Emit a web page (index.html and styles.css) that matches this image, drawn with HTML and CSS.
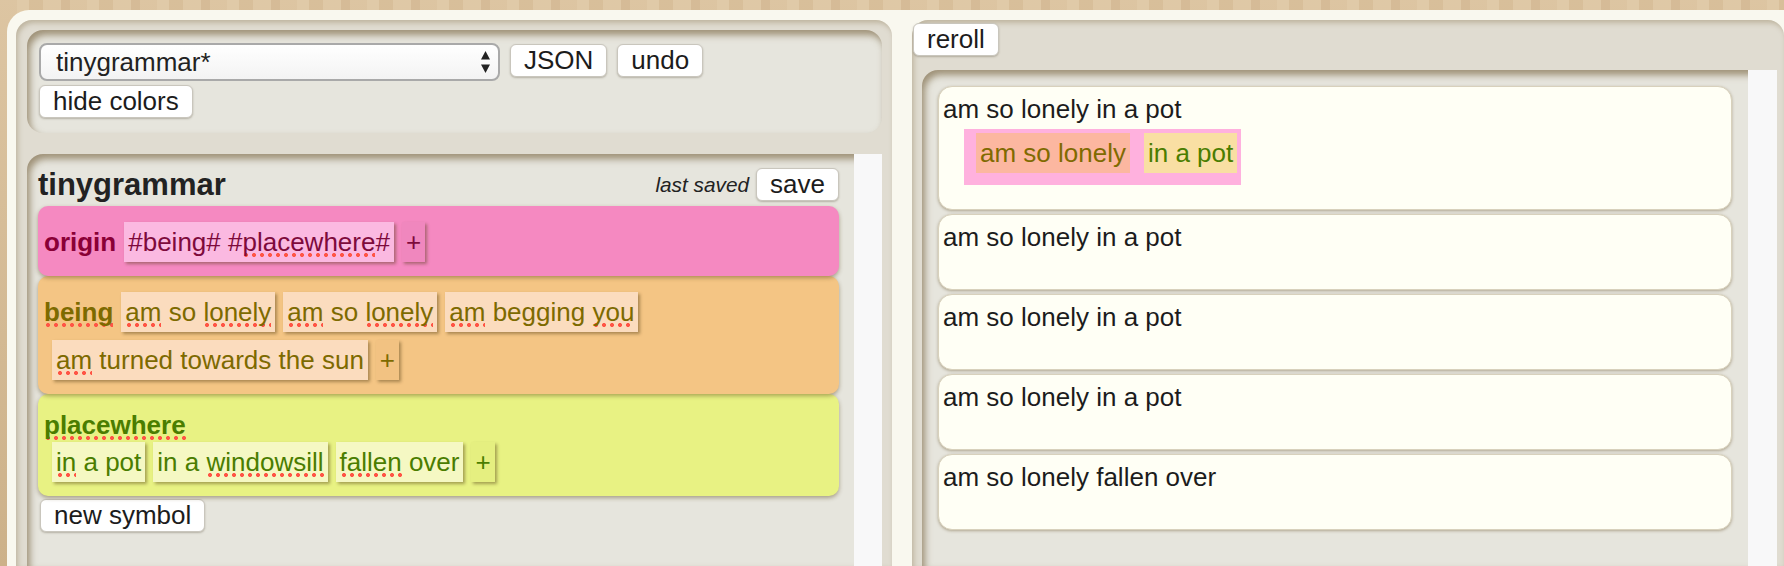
FILE: index.html
```html
<!DOCTYPE html>
<html>
<head>
<meta charset="utf-8">
<title>tinygrammar</title>
<link rel="stylesheet" href="styles.css">
</head>
<body>
<div class="frame">
  <section class="panel panel-left">
    <div class="inset toolbar">
      <div class="select" role="listbox">
        <span class="select-text">tinygrammar*</span>
        <svg class="select-arrows" width="11" height="24" viewBox="0 0 11 24"><path d="M5.5 1 L10 9.5 H1 Z" fill="#222"/><path d="M5.5 23 L10 14.5 H1 Z" fill="#222"/></svg>
      </div>
      <button class="btn">JSON</button>
      <button class="btn">undo</button>
      <button class="btn">hide colors</button>
    </div>
    <div class="inset grammar">
      <div class="grammar-body">
        <div class="title-row">
          <h1 class="title">tinygrammar</h1>
          <span class="saved">last saved</span>
          <button class="btn">save</button>
        </div>
        <div class="symbol sym-origin">
          <span class="label">origin</span>
          <span class="chip">#being# #<span class="sp">placewhere</span>#</span>
          <span class="chip chip-plus">+</span>
        </div>
        <div class="symbol sym-being">
          <span class="label"><span class="sp">being</span></span>
          <span class="chip"><span class="sp">am</span> so <span class="sp">lonely</span></span>
          <span class="chip"><span class="sp">am</span> so <span class="sp">lonely</span></span>
          <span class="chip"><span class="sp">am</span> begging <span class="sp">you</span></span>
          <span class="chip"><span class="sp">am</span> turned towards the sun</span>
          <span class="chip chip-plus">+</span>
        </div>
        <div class="symbol sym-place">
          <span class="label label-block"><span class="sp">placewhere</span></span>
          <span class="chip"><span class="sp">in</span> a pot</span>
          <span class="chip">in a <span class="sp">windowsill</span></span>
          <span class="chip"><span class="sp">fallen</span> over</span>
          <span class="chip chip-plus">+</span>
        </div>
        <button class="btn new-symbol">new symbol</button>
      </div>
      <div class="track"></div>
    </div>
  </section>
  <section class="panel panel-right">
    <button class="btn reroll">reroll</button>
    <div class="inset output">
      <div class="output-body">
        <div class="card card-first">
          <div class="text">am so lonely in a pot</div>
          <div class="tree-box"><span class="t-being">am so lonely</span><span class="t-place">in a pot</span></div>
        </div>
        <div class="card"><div class="text">am so lonely in a pot</div></div>
        <div class="card"><div class="text">am so lonely in a pot</div></div>
        <div class="card"><div class="text">am so lonely in a pot</div></div>
        <div class="card"><div class="text">am so lonely fallen over</div></div>
      </div>
      <div class="track"></div>
    </div>
  </section>
</div>
</body>
</html>
```
FILE: styles.css
```css
* { box-sizing: border-box; }
html, body { margin: 0; height: 566px; overflow: hidden; }
body {
  font-family: "Liberation Sans", Arial, Helvetica, sans-serif;
  font-size: 26px;
  color: #1c1c1c;
  background:
    linear-gradient(180deg, rgba(255, 255, 255, .12), rgba(120, 90, 50, .12)),
    repeating-linear-gradient(90deg, #d8bd95 0 17px, #dcc39c 17px 29px, #d3b68c 29px 43px, #dbc19a 43px 61px, #d0b289 61px 70px);
}
.frame {
  margin: 10px 0 0 7px;
  height: 556px;
  background: #f9f8ef;
  border-radius: 22px 0 0 0;
  padding: 10px 0 0 9px;
  display: flex;
  gap: 20px;
}
.panel {
  background: #e0dcd1;
  border-radius: 16px 16px 0 0;
  box-shadow: inset 2px 3px 5px rgba(130, 110, 70, .35);
  display: flex;
  flex-direction: column;
}
.panel-left { width: 876px; padding: 10px 10px 0 11px; }
.panel-right { flex: 1; padding: 3px 7px 0 1px; }

.inset {
  background: #e6e5dd;
  box-shadow: inset 3px 5px 7px rgba(110, 88, 50, .6);
}

/* buttons */
.btn {
  font: inherit;
  font-size: 26px;
  color: #1c1c1c;
  background: #fff;
  border: 1px solid #c9c6bd;
  border-radius: 6px;
  padding: 0 13px;
  height: 33px;
  line-height: 31px;
  box-shadow: 0 1px 2px rgba(90, 80, 60, .35);
  cursor: pointer;
}

/* toolbar */
.toolbar {
  height: 103px;
  border-radius: 16px;
  padding: 13px 60px 16px 12px;
  display: flex;
  flex-wrap: wrap;
  align-items: flex-start;
  align-content: flex-start;
  row-gap: 3px;
  column-gap: 10px;
}
.toolbar .btn { margin-top: 1px; }
.select {
  width: 461px;
  height: 38px;
  border: 2px solid #a9a9a9;
  border-radius: 8px;
  background: linear-gradient(#ffffff, #f3f3f3);
  display: flex;
  align-items: center;
  justify-content: space-between;
  padding: 0 7px 0 15px;
  color: #222;
}
.select-text { line-height: 34px; }
.select-arrows { display: block; }

/* grammar */
.grammar {
  margin-top: 21px;
  flex: 1;
  border-radius: 16px 0 0 0;
  display: flex;
}
.grammar-body { flex: 1; padding: 9px 15px 0 11px; }
.track { width: 28px; background: #f8f8f9; }
.title-row {
  height: 43px;
  display: flex;
  align-items: center;
}
.title {
  flex: 1;
  margin: 0;
  font-size: 31px;
  font-weight: bold;
  color: #222;
  line-height: 36px;
}
.saved { font-style: italic; font-size: 20.8px; margin-right: 7px; color: #222; }

.symbol {
  border-radius: 10px;
  padding: 16px 6px 14px;
  display: flex;
  flex-wrap: wrap;
  align-items: center;
  row-gap: 8px;
  box-shadow: 0 2px 4px rgba(90, 70, 30, .45);
  position: relative;
}
.label { font-weight: bold; line-height: 40px; }
.label-block { flex-basis: 100%; line-height: 30px; }
.chip {
  margin-left: 8px;
  padding: 0 4px;
  height: 40px;
  line-height: 40px;
  white-space: nowrap;
  box-shadow: 2px 2px 3px rgba(80, 60, 20, .45);
}
.sym-origin { background: #f589c1; color: #8a0036; z-index: 3; }
.sym-origin .chip { background: #fbb9e1; color: #7e0a3c; }
.sym-origin .chip-plus { background: #f087be; }
.sym-being { background: #f4c584; color: #7d6a00; z-index: 2; }
.sym-being .chip { background: #fbdcbe; }
.sym-being .chip-plus { background: #f2c282; }
.sym-place { background: #e8f283; color: #4a7d00; row-gap: 2px; z-index: 1; }
.sym-place .chip { background: #f5f8c3; }
.sym-place .chip-plus { background: #e5ef80; }

.sp {
  background-image: radial-gradient(circle at 4px 2px, #ff5545 0 1.7px, rgba(255, 85, 69, 0) 2.3px);
  background-size: 8px 4px;
  background-repeat: repeat-x;
  background-position: 0 100%;
}

.new-symbol { display: block; margin: 3px 0 0 2px; }

/* output */
.reroll { align-self: flex-start; }
.output {
  margin: 14px 0 0 9px;
  flex: 1;
  border-radius: 16px 0 0 0;
  display: flex;
}
.output .track { width: 29px; }
.output-body {
  flex: 1;
  padding: 16px;
  display: flex;
  flex-direction: column;
  gap: 4px;
}
.card {
  height: 76px;
  flex-shrink: 0;
  background: #fffff5;
  border: 1px solid #d8d1bc;
  border-radius: 14px;
  padding: 7px 4px 0;
  box-shadow: 0 1px 3px rgba(110, 90, 50, .45);
}
.card-first { height: 124px; }
.card .text { line-height: 30px; color: #1c1c1c; }
.tree-box {
  margin: 5px 0 0 21px;
  display: inline-flex;
  gap: 14px;
  background: #ffb1de;
  padding: 4px 4px 12px 12px;
}
.tree-box span { line-height: 40px; padding: 0 4px; }
.t-being { background: #fcb7a0; color: #806a00; }
.t-place { background: #f9dfa3; color: #4a7d00; }
```
